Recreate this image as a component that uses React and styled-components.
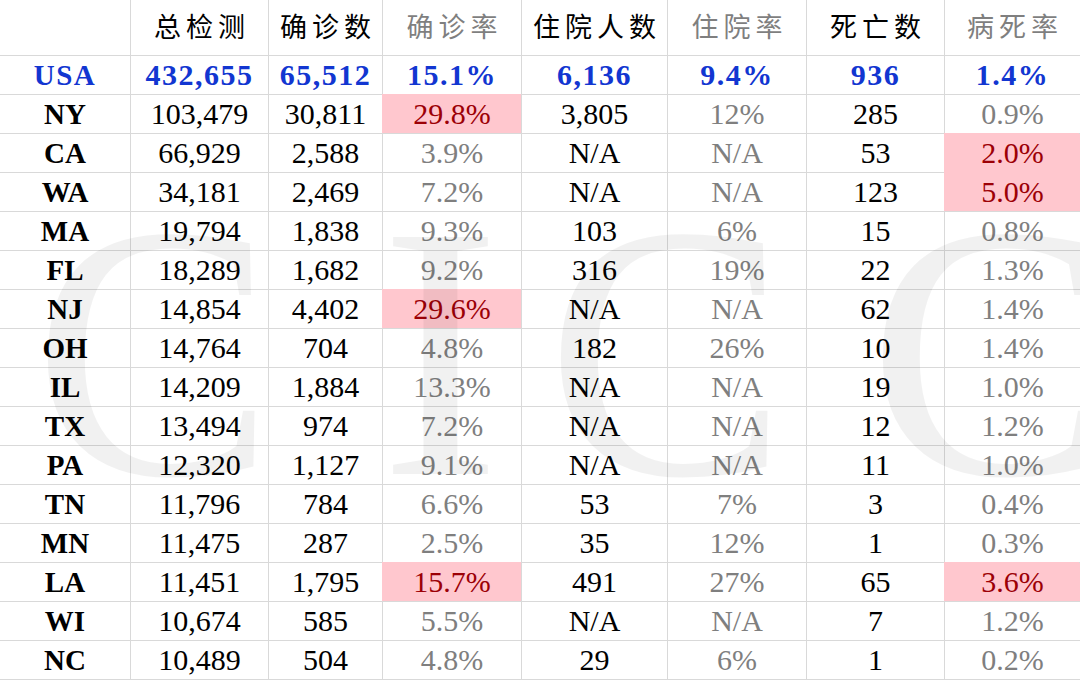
import React from "react";
import styled, { createGlobalStyle, css } from "styled-components";

const Global = createGlobalStyle`
  html, body { margin: 0; padding: 0; background: #ffffff; }
`;

const Page = styled.div`
  position: relative;
  width: 1080px;
  height: 680px;
  overflow: hidden;
  background: #ffffff;
`;

const Grid = styled.div`
  display: grid;
  grid-template-columns: 131px 138px 114px 139px 146px 139px 138px 135px;
  grid-template-rows: 56px;
  grid-auto-rows: 39px;
`;

const Cell = styled.div`
  position: relative;
  display: flex;
  align-items: center;
  justify-content: center;
  box-sizing: border-box;
  border-bottom: 1px solid #d9d9d9;
  border-right: ${(p) => (p.$last ? "none" : "1px solid #d9d9d9")};
  font-family: "Liberation Serif", "Times New Roman", serif;
  font-size: 30px;
  white-space: nowrap;
  color: ${(p) => (p.$muted ? "#7f7f7f" : "#000000")};
  ${(p) =>
    p.$state &&
    css`
      font-weight: 700;
      font-size: 29px;
    `}
  ${(p) =>
    p.$total &&
    css`
      font-weight: 700;
      color: #1236d1;
      letter-spacing: 1.5px;
    `}
  ${(p) =>
    p.$hot &&
    css`
      background: #ffc7ce;
      color: #9c0006;
      box-shadow: -1px -1px 0 0 #ffc7ce;
      border-bottom-color: ${p.$hotBelow ? "#ffc7ce" : "#d9d9d9"};
    `}
`;

const HeadCell = styled(Cell)`
  font-family: "Noto Sans CJK SC", "Noto Sans CJK TC", sans-serif;
  font-size: 27px;
  letter-spacing: 5px;
  padding: 0 0 5px 5px;
`;

const Watermark = styled.svg`
  position: absolute;
  inset: 0;
  pointer-events: none;
`;

const MarkLetter = styled.text`
  font-family: "Liberation Serif", "Times New Roman", serif;
  font-size: 362px;
  fill: rgba(0, 0, 0, 0.055);
`;

const headers = [
  { t: "", m: false },
  { t: "总检测", m: false },
  { t: "确诊数", m: false },
  { t: "确诊率", m: true },
  { t: "住院人数", m: false },
  { t: "住院率", m: true },
  { t: "死亡数", m: false },
  { t: "病死率", m: true },
];

const muted = [false, false, false, true, false, true, false, true];

const rows = [
  ["USA", "432,655", "65,512", "15.1%", "6,136", "9.4%", "936", "1.4%"],
  ["NY", "103,479", "30,811", "29.8%", "3,805", "12%", "285", "0.9%"],
  ["CA", "66,929", "2,588", "3.9%", "N/A", "N/A", "53", "2.0%"],
  ["WA", "34,181", "2,469", "7.2%", "N/A", "N/A", "123", "5.0%"],
  ["MA", "19,794", "1,838", "9.3%", "103", "6%", "15", "0.8%"],
  ["FL", "18,289", "1,682", "9.2%", "316", "19%", "22", "1.3%"],
  ["NJ", "14,854", "4,402", "29.6%", "N/A", "N/A", "62", "1.4%"],
  ["OH", "14,764", "704", "4.8%", "182", "26%", "10", "1.4%"],
  ["IL", "14,209", "1,884", "13.3%", "N/A", "N/A", "19", "1.0%"],
  ["TX", "13,494", "974", "7.2%", "N/A", "N/A", "12", "1.2%"],
  ["PA", "12,320", "1,127", "9.1%", "N/A", "N/A", "11", "1.0%"],
  ["TN", "11,796", "784", "6.6%", "53", "7%", "3", "0.4%"],
  ["MN", "11,475", "287", "2.5%", "35", "12%", "1", "0.3%"],
  ["LA", "11,451", "1,795", "15.7%", "491", "27%", "65", "3.6%"],
  ["WI", "10,674", "585", "5.5%", "N/A", "N/A", "7", "1.2%"],
  ["NC", "10,489", "504", "4.8%", "29", "6%", "1", "0.2%"],
];

const hot = {
  "NY-3": true,
  "CA-7": true,
  "WA-7": true,
  "NJ-3": true,
  "LA-3": true,
  "LA-7": true,
};

export default function App() {
  return (
    <Page>
      <Global />
      <Grid>
        {headers.map((h, i) => (
          <HeadCell key={"h" + i} $muted={h.m} $last={i === 7}>
            {h.t}
          </HeadCell>
        ))}
        {rows.map((r, ri) =>
          r.map((v, ci) => {
            const isTotal = ri === 0;
            const isHot = !!hot[r[0] + "-" + ci];
            const next = rows[ri + 1];
            const hotBelow = isHot && next && !!hot[next[0] + "-" + ci];
            return (
              <Cell
                key={r[0] + ci}
                $state={ci === 0}
                $total={isTotal}
                $muted={!isTotal && muted[ci]}
                $hot={isHot}
                $hotBelow={hotBelow}
                $last={ci === 7}
              >
                {v}
              </Cell>
            );
          })
        )}
      </Grid>
      <Watermark width="1080" height="680" viewBox="0 0 1080 680" aria-hidden="true">
        <MarkLetter x="33" y="474">C</MarkLetter>
        <MarkLetter x="380" y="474">I</MarkLetter>
        <MarkLetter x="546" y="474">C</MarkLetter>
        <MarkLetter x="868" y="474">C</MarkLetter>
      </Watermark>
    </Page>
  );
}
